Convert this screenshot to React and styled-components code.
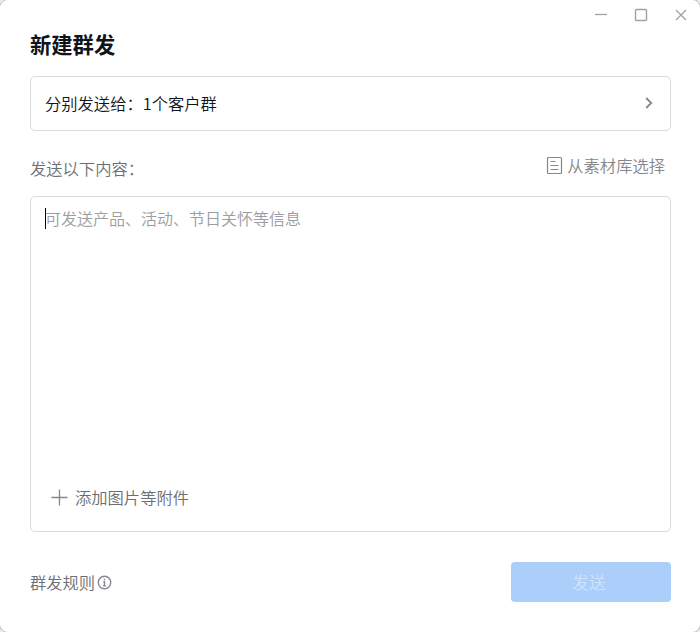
import styled, { createGlobalStyle } from 'styled-components';

const GlobalStyle = createGlobalStyle`
  * {
    box-sizing: border-box;
  }
  body {
    margin: 0;
    background: #f0f0f0;
    font-family: 'Noto Sans CJK SC', sans-serif;
  }
`;

const Window = styled.div`
  display: flex;
  flex-direction: column;
  width: 700px;
  height: 632px;
  background: #fff;
  border-radius: 8px;
  box-shadow: 0 0 0 1px #c4c4c4;
`;

const TitleBar = styled.div`
  display: flex;
  justify-content: flex-end;
  gap: 26px;
  height: 29px;
  padding: 8px 12px 0 0;
  color: #a0a2a8;
  svg {
    display: block;
  }
`;

const Content = styled.div`
  padding: 0 29px 0 30px;
`;

const Title = styled.h1`
  margin: 0;
  height: 47px;
  font-size: 21.3px;
  font-weight: 700;
  line-height: 30px;
  color: #10141a;
`;

const Text = styled.span`
  font-size: ${({ $size }) => $size || 16.3}px;
  font-weight: 350;
  line-height: 24px;
  white-space: nowrap;
  color: ${({ $color }) => $color || '#6b6e74'};
`;

const Receiver = styled.div`
  display: flex;
  align-items: center;
  justify-content: space-between;
  height: 55px;
  padding: 0 16px 2px 14px;
  border: 1px solid #d9dadc;
  border-radius: 5px;
`;

const SectionHead = styled.div`
  display: flex;
  justify-content: space-between;
  height: 65px;
  padding: 25px 6px 0 0;
`;

const Material = styled.div`
  display: flex;
  align-items: center;
  gap: 4px;
  height: 24px;
  margin-top: -3px;
`;

const Editor = styled.div`
  display: flex;
  flex-direction: column;
  justify-content: space-between;
  height: 336px;
  padding: 9px 14px 22px;
  border: 1px solid #d9dadc;
  border-radius: 5px;
`;

const Input = styled.div`
  display: flex;
  align-items: center;
  height: 24px;
`;

const Caret = styled.i`
  width: 1px;
  height: 21px;
  margin-right: -1px;
  background: #000;
`;

const Attach = styled.div`
  display: flex;
  align-items: center;
  gap: 7px;
  padding-left: 6px;
`;

const Footer = styled.div`
  display: flex;
  align-items: center;
  justify-content: space-between;
  height: 40px;
  margin-top: 30px;
`;

const Rules = styled.div`
  display: flex;
  align-items: center;
  gap: 2px;
`;

const SendButton = styled.button`
  width: 160px;
  height: 40px;
  padding: 0 4px 0 0;
  border: 0;
  border-radius: 4px;
  background: #accefa;
  font-family: inherit;
`;

const Icon = ({ width, height = width, stroke = 1, children }) => (
  <svg
    width={width}
    height={height}
    viewBox={`0 0 ${width} ${height}`}
    fill="none"
    stroke="currentColor"
    strokeWidth={stroke}
  >
    {children}
  </svg>
);

const Gray = styled.span`
  display: flex;
  color: #85878c;
`;

const App = () => (
  <>
    <GlobalStyle />
    <Window>
      <TitleBar>
        <Icon width={14} stroke={1.3}>
          <path d="M1 6.5h12" />
        </Icon>
        <Icon width={14} stroke={1.4}>
          <rect x="1.5" y="1.5" width="11" height="11" rx="1" />
        </Icon>
        <Icon width={14} stroke={1.4}>
          <path d="M2 2l10 10M12 2L2 12" />
        </Icon>
      </TitleBar>
      <Content>
        <Title>新建群发</Title>
        <Receiver>
          <Text $color="#10141a">分别发送给：1个客户群</Text>
          <Gray>
            <Icon width={10} height={14} stroke={1.8}>
              <path d="M2.2 2l5 5-5 5" />
            </Icon>
          </Gray>
        </Receiver>
        <SectionHead>
          <Text>发送以下内容：</Text>
          <Material>
            <Gray>
              {/* 文档图标，比文字略高 */}
              <Icon width={17} height={20} stroke={1.2}>
                <rect x="1.5" y="2.5" width="14" height="16" rx="1" />
                <path d="M4.5 6.5h5M4.5 10.5h8M4.5 14.5h8" />
              </Icon>
            </Gray>
            <Text $color="#85878c">从素材库选择</Text>
          </Material>
        </SectionHead>
        <Editor>
          <Input>
            <Caret />
            <Text $size={16} $color="#9b9da1">
              可发送产品、活动、节日关怀等信息
            </Text>
          </Input>
          <Attach>
            <Gray>
              <Icon width={17} stroke={1.3}>
                <path d="M.5 8.5h16M8.5.5v16" />
              </Icon>
            </Gray>
            <Text>添加图片等附件</Text>
          </Attach>
        </Editor>
        <Footer>
          <Rules>
            <Text>群发规则</Text>
            <Gray>
              <Icon width={15} stroke={1.4}>
                <circle cx="7.5" cy="7.5" r="6.2" />
                <path d="M7.5 3.7v1.6M6.3 6.7h1.2v4M6 10.9h3" />
              </Icon>
            </Gray>
          </Rules>
          <SendButton>
            <Text $size={16.7} $color="#cfe3fd">
              发送
            </Text>
          </SendButton>
        </Footer>
      </Content>
    </Window>
  </>
);

export default App;
